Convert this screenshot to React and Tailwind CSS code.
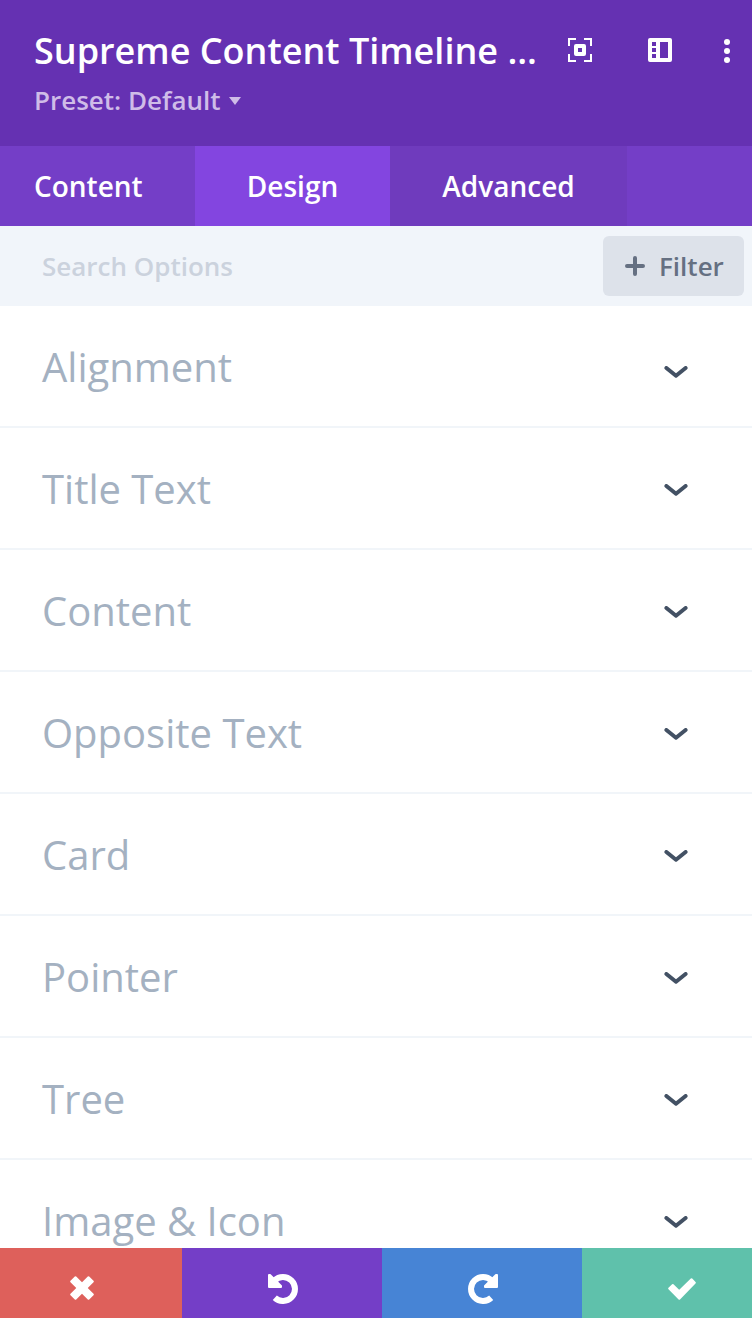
const sections = [
  "Alignment",
  "Title Text",
  "Content",
  "Opposite Text",
  "Card",
  "Pointer",
  "Tree",
  "Image & Icon",
];

function ExpandIcon() {
  return (
    <svg width="24" height="24" viewBox="0 0 24 24" fill="none" stroke="#fff">
      <path d="M8 1H1v7M16 1h7v7M1 16v7h7M23 16v7h-7" strokeWidth="2" />
      <rect x="8" y="8" width="8" height="8" strokeWidth="4" strokeLinejoin="round" />
    </svg>
  );
}

function PanelIcon() {
  return (
    <svg width="24" height="24" viewBox="0 0 24 24">
      <path
        fill="#fff"
        fillRule="evenodd"
        d="M2 0h20a2 2 0 0 1 2 2v20a2 2 0 0 1-2 2H2a2 2 0 0 1-2-2V2a2 2 0 0 1 2-2zM4 4v4h4V4zM4 10v4h4v-4zM4 16v4h4v-4zM12 4v16h8V4z"
      />
    </svg>
  );
}

function DotsIcon() {
  return (
    <svg width="6" height="24" viewBox="0 0 6 24" fill="#fff">
      <circle cx="3" cy="3" r="3" />
      <circle cx="3" cy="12" r="3" />
      <circle cx="3" cy="21" r="3" />
    </svg>
  );
}

function ChevronIcon() {
  return (
    <svg width="24" height="12" viewBox="0 0 24 12" fill="none">
      <path d="M2.4 2 12 9.8 21.6 2" stroke="#435164" strokeWidth="4" strokeLinecap="round" strokeLinejoin="round" />
    </svg>
  );
}

function UndoIcon({ className }) {
  return (
    <svg className={className} width="30" height="30" viewBox="0 0 30 30">
      <path d="M6.5 6.5A12 12 0 1 1 6.8 23.8" fill="none" stroke="#fff" strokeWidth="6" />
      <path d="M1 1v12h12v-1L2 1z" fill="#fff" stroke="#fff" strokeWidth="2" strokeLinejoin="round" />
    </svg>
  );
}

export default function App() {
  return (
    <div className="flex h-[1318px] w-[752px] flex-col overflow-hidden bg-white font-['Open_Sans',sans-serif]">
      {/* Header */}
      <header className="flex h-[146px] shrink-0 justify-between bg-[#6531b2] pl-[34px] pr-[22px]">
        <div className="pt-[26px]">
          <h1 className="whitespace-nowrap text-[36px] leading-[50px] font-semibold text-white">
            Supreme Content Timeline ...
          </h1>
          <div className="mt-[6px] flex items-center gap-2 text-[26px] leading-9 font-semibold text-[#cfbce8]">
            <span>Preset: Default</span>
            <svg width="12" height="8" viewBox="0 0 12 8" fill="currentColor" className="mt-0.5">
              <path d="M0 0h12L6 8z" />
            </svg>
          </div>
        </div>
        <div className="flex items-start pt-[38px]">
          <ExpandIcon />
          <div className="ml-14">
            <PanelIcon />
          </div>
          <div className="ml-[52px] pt-px">
            <DotsIcon />
          </div>
        </div>
      </header>

      {/* Tabs */}
      <nav className="flex h-20 shrink-0 bg-[#743ec7] text-[28px] font-semibold text-white">
        <button className="w-[195px] pl-[34px] text-left">Content</button>
        <button className="w-[195px] bg-[#8345e0]">Design</button>
        <button className="w-[237px] bg-[#6f3bbd]">Advanced</button>
      </nav>

      {/* Search */}
      <div className="flex h-20 shrink-0 items-center justify-between bg-[#f1f5fa] pl-[42px] pr-2">
        <span className="text-[26px] font-semibold text-[#cbd2dd]">Search Options</span>
        <button className="flex h-[60px] w-[141px] items-center rounded-md bg-[#dde2ea] pl-[22px] text-[26px] font-semibold text-[#657082]">
          <svg width="20" height="20" viewBox="0 0 20 20" className="mr-[14px]">
            <path d="M10 2v16M2 10h16" stroke="currentColor" strokeWidth="4" strokeLinecap="round" />
          </svg>
          Filter
        </button>
      </div>

      {/* Option groups */}
      <main className="min-h-0 flex-1 overflow-hidden">
        {sections.map((name, i) => (
          <div
            key={name}
            className="flex h-[122px] items-center justify-between border-b-2 border-[#f1f5f9] pl-[42px] pr-16"
          >
            <span className="pt-0.5 text-[40px] leading-[54px] text-[#a4b1c1]">{name}</span>
            <div className={i === 0 ? "pt-3" : "pt-1"}>
              <ChevronIcon />
            </div>
          </div>
        ))}
      </main>

      {/* Actions */}
      <footer className="flex h-[70px] shrink-0">
        <button className="w-[182px] bg-[#de605b] pl-[70px] pt-2.5">
          <svg width="24" height="24" viewBox="0 0 24 24" fill="#fff" stroke="#fff" strokeWidth="2" strokeLinejoin="round">
            <path d="M5.5 1.2 1.2 5.5l17.3 17.3 4.3-4.3z" />
            <path d="M18.5 1.2l4.3 4.3L5.5 22.8l-4.3-4.3z" />
          </svg>
        </button>
        <button className="w-[200px] bg-[#743ec7] pl-[86px] pt-3">
          <UndoIcon />
        </button>
        <button className="w-[200px] bg-[#4784d5] pl-[86px] pt-3">
          <UndoIcon className="-scale-x-100" />
        </button>
        <button className="w-[170px] bg-[#5fc1ab] pl-[86px] pt-3">
          <svg width="28" height="22" viewBox="0 0 28 22" fill="#fff" stroke="#fff" strokeWidth="2" strokeLinejoin="round">
            <path d="M23.5 1.2l3.300 3.600L11.300 20.800 1.200 10.500 4.800 7l6.400 6.300z" />
          </svg>
        </button>
      </footer>
    </div>
  );
}
